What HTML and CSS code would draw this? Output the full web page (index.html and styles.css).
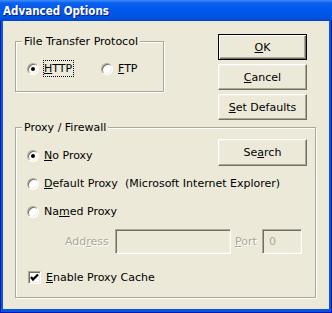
FILE: index.html
```html
<!DOCTYPE html>
<html>
<head>
    <title>Advanced Options</title>
    <link rel="stylesheet" href="styles.css">
</head>
<body>
    <div class="window">
        <!-- Title bar -->
        <div class="titlebar">
            <span class="title">Advanced Options</span>
        </div>

        <div class="client">
            <div class="top">
                <!-- Protocol group -->
                <fieldset class="group ftp">
                    <legend>File Transfer Protocol</legend>
                    <div class="radio-row">
                        <label class="radio wide">
                            <span class="radio-box checked"></span>
                            <span class="focus"><u>H</u>TTP</span>
                        </label>
                        <label class="radio">
                            <span class="radio-box"></span>
                            <span class="caption"><u>F</u>TP</span>
                        </label>
                    </div>
                </fieldset>

                <!-- Dialog buttons -->
                <div class="buttons">
                    <button class="btn default"><u>O</u>K</button>
                    <button class="btn"><u>C</u>ancel</button>
                    <button class="btn"><u>S</u>et Defaults</button>
                </div>
            </div>

            <!-- Proxy group -->
            <fieldset class="group proxy">
                <legend>Proxy / Firewall</legend>
                <div class="proxy-top">
                    <label class="radio first">
                        <span class="radio-box checked"></span>
                        <span class="caption"><u>N</u>o Proxy</span>
                    </label>
                    <button class="btn search">Se<u>a</u>rch</button>
                </div>
                <label class="radio option">
                    <span class="radio-box"></span>
                    <span class="caption fixed"><u>D</u>efault Proxy</span>
                    <span>(Microsoft Internet Explorer)</span>
                </label>
                <label class="radio option named">
                    <span class="radio-box"></span>
                    <span class="caption">Na<u>m</u>ed Proxy</span>
                </label>
                <div class="address-row">
                    <span class="disabled addr-label">Add<u>r</u>ess</span>
                    <input class="field addr" type="text" disabled>
                    <span class="disabled port-label"><u>P</u>ort</span>
                    <input class="field port" type="text" value="0" disabled>
                </div>
                <label class="check-row">
                    <span class="check-box">
                        <svg viewBox="0 0 11 11" width="11" height="11">
                            <polyline points="2,5 4,7.5 9,2.5" fill="none" stroke="#000" stroke-width="2.2"></polyline>
                        </svg>
                    </span>
                    <span class="caption"><u>E</u>nable Proxy Cache</span>
                </label>
            </fieldset>
        </div>
    </div>
</body>
</html>
```

FILE: styles.css
```css
body {
    margin: 0;
    font-family: "DejaVu Sans", sans-serif;
    font-size: 11px;
    color: #000;
}

.window {
    width: 332px;
    height: 313px;
    box-sizing: border-box;
    display: flex;
    flex-direction: column;
    border: solid #0019a8;
    border-width: 0 1px 1px 1px;
}

.titlebar {
    height: 21px;
    margin: 0 -1px;
    display: flex;
    align-items: center;
    padding-left: 3px;
    background: linear-gradient(#3c8dff 0, #0a5ff0 3px, #0058ea 50%, #0052e2 85%, #0046cc 100%);
}

.title {
    color: #fff;
    font-family: "DejaVu Sans Condensed", "DejaVu Sans", sans-serif;
    font-weight: bold;
    font-size: 11.5px;
    text-shadow: 1px 1px 0 #0a1f8f;
}

.client {
    flex: 1;
    background: #ece9d8;
    border: solid #0a55e0;
    border-width: 0 2px 3px 2px;
    padding: 13px 13px 0 12px;
}

.top {
    display: flex;
    justify-content: space-between;
    align-items: flex-start;
}

/* group boxes */
.group {
    margin: 0;
    border: 1px solid #aca899;
    box-shadow: inset 1px 1px 0 #fff, 1px 1px 0 #fff;
    padding: 0 8px 0 6px;
}

.group legend {
    padding: 0 2px;
    line-height: 13px;
    background: #ece9d8;
}

.ftp {
    margin-top: 1px;
    width: 149px;
    box-sizing: border-box;
    padding-top: 12px;
    padding-bottom: 14px;
}

.proxy {
    margin-top: 1px;
    padding-top: 5px;
    padding-bottom: 12px;
}

/* radio buttons */
.radio-row {
    display: flex;
    height: 17px;
    margin-left: 5px;
}

.radio {
    display: flex;
    align-items: center;
    gap: 5px;
    line-height: 16px;
}

.radio.wide {
    width: 74px;
    gap: 4px;
}

.radio-box {
    width: 10px;
    height: 10px;
    flex: none;
    border-radius: 50%;
    background: #fff;
    border: 1px solid;
    border-color: #aca899 #fff #fff #aca899;
    box-shadow: inset 1px 1px 0 #716f64, inset -1px -1px 0 #f1efe2;
    display: flex;
    align-items: center;
    justify-content: center;
}

.radio-box.checked::after {
    content: "";
    width: 4px;
    height: 4px;
    border-radius: 50%;
    background: #000;
}

.focus {
    border: 1px dotted #000;
    padding: 0 1px 0 0;
    line-height: 15px;
}

.proxy-top {
    display: flex;
    justify-content: space-between;
    align-items: flex-start;
}

.radio.first {
    margin: 9px 0 0 5px;
}

.radio.option {
    margin: 10px 0 0 5px;
}

.radio.named {
    margin-top: 12px;
}

.caption.fixed {
    width: 76px;
}

/* push buttons */
.buttons {
    display: flex;
    flex-direction: column;
    gap: 4px;
    margin-right: 9px;
}

.btn {
    width: 89px;
    height: 26px;
    margin: 0;
    padding: 0;
    font: inherit;
    color: #000;
    background: #ece9d8;
    border: 1px solid;
    border-color: #fff #716f64 #716f64 #fff;
    box-shadow: inset -1px -1px 0 #aca899, inset 1px 1px 0 #f1efe2;
}

.btn.default {
    border-color: #000;
    box-shadow: inset 1px 1px 0 #fff, inset -1px -1px 0 #716f64, inset -2px -2px 0 #aca899;
}

.btn.search {
    height: 27px;
}

/* disabled address fields */
.address-row {
    display: flex;
    align-items: center;
    margin: 9px 0 0 43px;
    height: 25px;
}

.disabled {
    color: #aca899;
    text-shadow: 1px 1px 0 #fff;
}

.addr-label {
    width: 50px;
}

.port-label {
    width: 27px;
    margin-left: 4px;
}

.field {
    box-sizing: border-box;
    height: 25px;
    margin: 0;
    padding: 0 0 0 6px;
    font: inherit;
    color: #aca899;
    background: #ece9d8;
    border: 1px solid;
    border-color: #aca899 #fff #fff #aca899;
    box-shadow: inset 1px 1px 0 #716f64, inset -1px -1px 0 #f1efe2;
}

.field.addr {
    width: 116px;
}

.field.port {
    width: 40px;
}

/* checkbox */
.check-row {
    display: flex;
    align-items: center;
    gap: 5px;
    height: 16px;
    margin: 15px 0 0 6px;
}

.check-box {
    width: 11px;
    height: 11px;
    flex: none;
    background: #fff;
    border: 1px solid;
    border-color: #aca899 #fff #fff #aca899;
    box-shadow: inset 1px 1px 0 #716f64, inset -1px -1px 0 #f1efe2;
    display: flex;
}
```
